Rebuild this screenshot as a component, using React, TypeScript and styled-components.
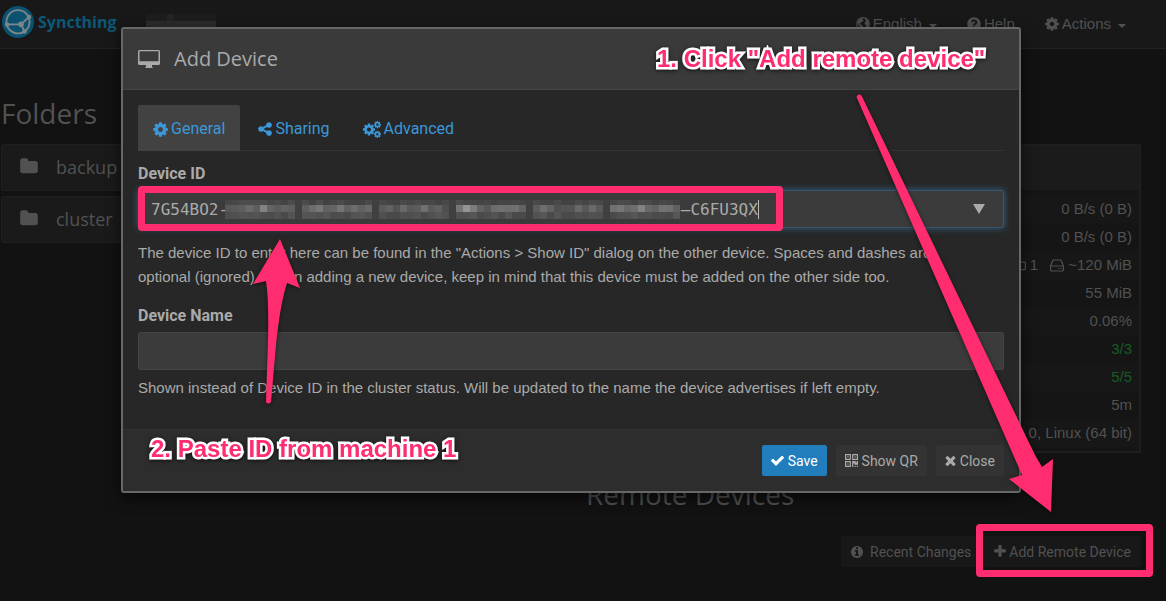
import React from "react";
import styled, { createGlobalStyle } from "styled-components";
import { FaQuestionCircle, FaRegFolder } from "react-icons/fa";

const PINK = "#ff2d6f";
const BODY = `"Liberation Sans", Arial, sans-serif`;
const HEAD = `"Open Sans", Lato, sans-serif`;

const Global = createGlobalStyle`
  * { box-sizing: border-box; }
  html, body { min-height: 100%; }
  body { margin: 0; background: #121212; color: #515151; font: 15px/24px ${BODY}; }
  h1, h2, p { margin: 0; padding: 0; font-weight: 400; }
  svg { flex: none; }
`;

const Page = styled.div`
  position: relative;
  min-height: 100vh;
  overflow: hidden;
`;
const NavBar = styled.nav`
  display: flex;
  align-items: center;
  height: 49px;
  padding: 0 40px 4px 2px;
  background: #181818;
  border-bottom: 1px solid #222;
`;
const Brand = styled.a`
  display: flex;
  align-items: center;
  gap: 4px;
  color: #0c5878;
  text-decoration: none;
  font: 700 16px/24px ${HEAD};
`;
const HostName = styled.svg`
  display: block;
  margin: 0 0 4px 29px;
  align-self: flex-end;
`;
const NavLinks = styled.div`
  display: flex;
  gap: 30px;
  margin-left: auto;
  padding-top: 4px;
`;
const NavButton = styled.button`
  display: flex;
  align-items: center;
  gap: 3px;
  padding: 0;
  border: 0;
  background: none;
  color: #515151;
  font: inherit;
`;
const Caret = styled.span`
  margin: 3px 0 0 4px;
  border: 4px solid transparent;
  border-top-color: currentColor;
  border-bottom: 0;
`;
const Columns = styled.main`
  display: grid;
  grid-template-columns: 1fr 1fr;
  gap: 30px;
  padding: 46px 25px 0 1px;
`;
const Heading = styled.h2`
  padding: 0 0 13px;
  font: 400 28px/36px ${HEAD};
`;
const FolderRow = styled.button`
  display: flex;
  align-items: center;
  gap: 18px;
  width: 100%;
  height: 47px;
  margin-bottom: 5px;
  padding: 0 18px 2px;
  border: 1px solid #1f1f1f;
  border-radius: 2px;
  background: #1a1a1a;
  color: #515151;
  font: 400 18px/24px ${HEAD};
`;
const StatusPanel = styled.section`
  margin-top: 49px;
  border: 2px solid #1e1e1e;
  background: #151515;
  padding-bottom: 4px;
`;
const PanelHead = styled.div`
  height: 44px;
  background: #1b1b1b;
  margin-bottom: 5px;
`;
const Stats = styled.table`
  width: 100%;
  border-collapse: collapse;
  td { height: 28px; padding: 0 7px; text-align: right; }
  tr:nth-child(odd) { background: #171717; }
`;
const Value = styled.td<{ $ok?: boolean }>`
  color: ${(p) => (p.$ok ? "#165c26" : "#515151")};
  svg { vertical-align: -2px; margin: 0 4px 0 8px; }
`;
const RemoteHeading = styled(Heading)`
  padding: 23px 0 24px;
`;
const Actions = styled.div`
  display: flex;
  justify-content: flex-end;
  gap: 3px;
`;
const DarkButton = styled.button<{ $wide?: boolean }>`
  display: flex;
  align-items: center;
  gap: ${(p) => (p.$wide ? 7 : 3)}px;
  height: 31px;
  padding: 0 10px;
  border: 0;
  border-radius: 2px;
  background: #181818;
  color: #515151;
  font: 14px/20px Roboto, sans-serif;
`;

const Backdrop = styled.div`
  position: absolute;
  inset: 0;
  padding: 27px 24px 0 0;
`;
const Dialog = styled.section`
  max-width: 900px;
  margin: 0 auto;
  border: 2px solid #676767;
  border-radius: 3px;
  background: #272727;
  color: #aaa;
  box-shadow: 0 5px 15px rgba(0, 0, 0, 0.6);
`;
const DialogHead = styled.header`
  display: flex;
  align-items: center;
  gap: 14px;
  height: 61px;
  padding: 0 15px;
  background: #3a3a3a;
  border-bottom: 1px solid #444;
`;
const DialogTitle = styled.h1`
  font: 400 20px/28px ${HEAD};
`;
const DialogBody = styled.div`
  padding: 15px 15px 14px;
`;
const Tabs = styled.div`
  display: flex;
  gap: 3px;
  margin-bottom: 11px;
  border-bottom: 1px solid #333;
`;
const Tab = styled.button<{ $active?: boolean }>`
  display: flex;
  align-items: center;
  gap: 3px;
  height: 46px;
  margin-bottom: -1px;
  padding: 2px 15px 0;
  border: 0;
  border-radius: 2px 2px 0 0;
  background: ${(p) => (p.$active ? "#424242" : "transparent")};
  color: #3b98d9;
  font: 16px/24px Roboto, sans-serif;
`;
const Label = styled.label`
  display: block;
  margin-bottom: 4px;
  font: 700 16px/24px Roboto, sans-serif;
`;
const Field = styled.div<{ $gap: number }>`
  position: relative;
  margin-bottom: ${(p) => p.$gap}px;
`;
const TextInput = styled.input<{ $focused?: boolean }>`
  display: block;
  width: 100%;
  height: 38px;
  padding: 0 12px;
  border: 1px solid ${(p) => (p.$focused ? "#37566c" : "#444")};
  border-radius: 2px;
  outline: 0;
  background: #3b3b3b;
  color: #aaa;
  font: 16px/24px "DejaVu Sans Mono", monospace;
  box-shadow: ${(p) => (p.$focused ? "0 0 7px rgba(60, 130, 180, 0.7)" : "none")};
`;
const Mosaic = styled.svg`
  position: absolute;
  left: 87px;
  top: 10px;
`;
const Cursor = styled.i`
  position: absolute;
  left: 620px;
  top: 10px;
  width: 1px;
  height: 19px;
  background: #bbb;
`;
const DropMark = styled.span`
  position: absolute;
  right: 19px;
  top: 14px;
  border: 6px solid transparent;
  border-top: 10px solid #aaa;
  border-bottom: 0;
`;
const Help = styled.p`
  margin-bottom: 15px;
`;
const DialogFoot = styled.footer`
  display: flex;
  justify-content: flex-end;
  gap: 9px;
  padding: 15px;
  background: #2d2d2d;
  border-top: 1px solid #333;
`;
const FootButton = styled(DarkButton)<{ $primary?: boolean }>`
  gap: 4px;
  padding: 0 9px;
  background: ${(p) => (p.$primary ? "#217dbb" : "#333")};
  color: ${(p) => (p.$primary ? "#fff" : "#aaa")};
`;

const Layer = styled.div`
  position: absolute;
  inset: 0;
  pointer-events: none;
`;
const Arrows = styled.svg`
  position: absolute;
  left: 0;
  top: 0;
  filter: drop-shadow(0 1px 2px rgba(0, 0, 0, 0.5));
`;
const Frame = styled.div<{ $x: number; $y: number; $w: number; $h: number }>`
  position: absolute;
  left: ${(p) => p.$x}px;
  top: ${(p) => p.$y}px;
  width: ${(p) => p.$w}px;
  height: ${(p) => p.$h}px;
  border: 7px solid ${PINK};
  border-radius: 4px;
`;
const Note = styled.p<{ $x: number; $y: number }>`
  position: absolute;
  left: ${(p) => p.$x}px;
  top: ${(p) => p.$y}px;
  color: ${PINK};
  font: 700 24px/28px "Liberation Sans", sans-serif;
  white-space: nowrap;
  -webkit-text-stroke: 5px #fff;
  paint-order: stroke fill;
  filter: drop-shadow(0 1px 2px rgba(0, 0, 0, 0.7));
`;

/* Brightness of the middle band of the masked part of the ID, one list per group. */
const MASK_GROUPS = [
  [88, 90, 94, 106, 94, 130, 100, 92, 98, 94],
  [94, 108, 118, 96, 100, 116, 98, 108, 96, 104],
  [90, 98, 84, 104, 88, 92, 112, 90, 96, 78],
  [118, 148, 124, 98, 88, 108, 112, 110, 112, 98],
  [92, 110, 98, 80, 84, 84, 104, 88, 106, 90],
  [112, 118, 104, 110, 130, 104, 98, 114, 112, 96],
];

const PATHS = {
  cog: "M1024 896q0-106-75-181t-181-75-181 75-75 181 75 181 181 75 181-75 75-181zm512-109v222q0 12-8 23t-20 13l-185 28q-19 54-39 91 35 50 107 138 10 12 10 25t-9 23q-27 37-99 108t-94 71q-12 0-26-9l-138-108q-44 23-91 38-16 136-29 186-7 28-36 28h-222q-14 0-24.500-8.500t-11.500-21.500l-28-184q-49-16-90-37l-141 107q-10 9-25 9-14 0-25-11-126-114-165-168-7-10-7-23 0-12 8-23 15-21 51-66.500t54-70.500q-27-50-41-99l-183-27q-13-2-21-12.500t-8-23.500v-222q0-12 8-23t19-13l186-28q14-46 39-92-40-57-107-138-10-12-10-24 0-10 9-23 26-36 98.500-107.500t94.500-71.500q13 0 26 10l138 107q44-23 91-38 16-136 29-186 7-28 36-28h222q14 0 24.500 8.500t11.500 21.500l28 184q49 16 90 37l142-107q9-9 24-9 13 0 25 10 129 119 165 170 7 8 7 22 0 12-8 23-15 21-51 66.500t-54 70.500q26 50 41 98l183 28q13 2 21 12.500t8 23.500z",
  times: "M1490 1322q0 40-28 68l-136 136q-28 28-68 28t-68-28l-294-294-294 294q-28 28-68 28t-68-28l-136-136q-28-28-28-68t28-68l294-294-294-294q-28-28-28-68t28-68l136-136q28-28 68-28t68 28l294 294 294-294q28-28 68-28t68 28l136 136q28 28 28 68t-28 68l-294 294 294 294q28 28 28 68z",
  plus: "M1600 736v192q0 40-28 68t-68 28h-416v416q0 40-28 68t-68 28h-192q-40 0-68-28t-28-68v-416h-416q-40 0-68-28t-28-68v-192q0-40 28-68t68-28h416v-416q0-40 28-68t68-28h192q40 0 68 28t28 68v416h416q40 0 68 28t28 68z",
  check: "M1671 566q0 40-28 68l-724 724-136 136q-28 28-68 28t-68-28l-136-136-362-362q-28-28-28-68t28-68l136-136q28-28 68-28t68 28l294 295 656-657q28-28 68-28t68 28l136 136q28 28 28 68z",
  folder: "M1728 608v704q0 92-66 158t-158 66h-1216q-92 0-158-66t-66-158v-960q0-92 66-158t158-66h320q92 0 158 66t66 158v32h672q92 0 158 66t66 158z",
  share: "M1344 1024q133 0 226.500 93.500t93.500 226.500-93.500 226.500-226.500 93.500-226.500-93.500-93.500-226.500q0-12 2-34l-360-180q-92 86-218 86-133 0-226.500-93.500t-93.500-226.500 93.500-226.500 226.500-93.500q126 0 218 86l360-180q-2-22-2-34 0-133 93.500-226.500t226.500-93.500 226.500 93.500 93.500 226.500-93.500 226.500-226.500 93.500q-126 0-218-86l-360 180q2 22 2 34t-2 34l360 180q92-86 218-86z",
  info: "M1152 1376v-160q0-14-9-23t-23-9h-96v-512q0-14-9-23t-23-9h-320q-14 0-23 9t-9 23v160q0 14 9 23t23 9h96v320h-96q-14 0-23 9t-9 23v160q0 14 9 23t23 9h448q14 0 23-9t9-23zm-128-896v-160q0-14-9-23t-23-9h-192q-14 0-23 9t-9 23v160q0 14 9 23t23 9h192q14 0 23-9t9-23zm640 416q0 209-103 385.500t-279.500 279.500-385.500 103-385.500-103-279.500-279.500-103-385.500 103-385.500 279.500-279.500 385.500-103 385.500 103 279.500 279.500 103 385.500z",
};

/* Icon on a 1792-unit em square, cropped to its own horizontal extent. */
const Icon = ({ name, em = 16, x = 128, w = 1536 }: { name: keyof typeof PATHS; em?: number; x?: number; w?: number }) => (
  <svg width={Math.round((em * w) / 1792)} height={em} viewBox={`${x} 0 ${w} 1792`} fill="currentColor" aria-hidden="true">
    <path d={PATHS[name]} />
  </svg>
);
const Cog = () => <Icon name="cog" em={17} x={0} />;
const Cogs = () => (
  <svg width="18" height="17" viewBox="0 0 1920 1792" fill="currentColor" aria-hidden="true">
    <path d={PATHS.cog} transform="translate(0 149) scale(.833)" />
    <path d={PATHS.cog} transform="translate(1152 -64) scale(.5)" />
    <path d={PATHS.cog} transform="translate(1152 960) scale(.5)" />
  </svg>
);
const QrIcon = () => (
  <svg width="13" height="13" viewBox="0 0 11 11" fill="currentColor" aria-hidden="true">
    <path fillRule="evenodd" d="M0 0h5v5H0zM1 1v3h3V1zM2 2h1v1H2zM6 0h5v5H6zM7 1v3h3V1zM8 2h1v1H8zM0 6h5v5H0zM1 7v3h3V7zM2 8h1v1H2zM6 6h3v1h1V6h1v3H8V8H7v3H6zM8 10h1v1H8zM10 10h1v1h-1z" />
  </svg>
);
const GlobeIcon = () => (
  <svg width="14" height="14" viewBox="0 0 14 14" aria-hidden="true">
    <circle cx="7" cy="7" r="6.300" fill="none" stroke="currentColor" strokeWidth="1.200" />
    <path fill="currentColor" d="M2 4.500 4.500 2 7 1.600 6.500 3 7.500 3.700 6 5 4.500 5.200 5 6.500 3.500 6 4 7.500 6 8 6.800 9.500 5.500 12 4.500 10 2.500 8 1.500 6zM9 2l2.500 1.200L13 6l-.5 3-1.500 2-1-1 .3-2L8.500 7.200 9 5l1.200-.6z" />
  </svg>
);
const DriveIcon = () => (
  <svg width="14" height="13" viewBox="0 0 14 13" fill="none" stroke="currentColor" strokeWidth="1.200" aria-hidden="true">
    <path d="M.6 7 2.600 1.800Q3 1 3.800 1h6.400q.8 0 1.200.8L13.400 7v4q0 1-1 1H1.600q-1 0-1-1zM.6 7h12.800M8 9.500h1.200M10.500 9.500h1.200" />
  </svg>
);
const SyncLogo = () => (
  <svg width="32" height="32" viewBox="0 0 32 32" fill="none" aria-hidden="true">
    <circle cx="16" cy="16" r="16" fill="#0b5270" />
    <g stroke="#7b868a" strokeWidth="1.800">
      <circle cx="16" cy="15.800" r="11.600" />
      <path d="M5 18.500 19 18.200 27 11M19 18.200 22.500 25.500" />
    </g>
    <g fill="#7b868a">
      <circle cx="5" cy="18.500" r="2.200" />
      <circle cx="19" cy="18.200" r="2.800" />
      <circle cx="27" cy="11" r="2.200" />
      <circle cx="22.500" cy="25.500" r="2.200" />
    </g>
  </svg>
);
const DesktopIcon = () => (
  <svg width="22" height="19" viewBox="0 0 22 19" fill="currentColor" aria-hidden="true">
    <path fillRule="evenodd" d="M1.500 0h19A1.500 1.500 0 0 1 22 1.500v12a1.500 1.500 0 0 1-1.500 1.500H14v1.500a1 1 0 0 0 1 1V18H7v-.5a1 1 0 0 0 1-1V15H1.500A1.500 1.500 0 0 1 0 13.500v-12A1.500 1.500 0 0 1 1.500 0zm0 1.300v10h19v-10z" />
  </svg>
);

const grey = (v: number) => `rgb(${v},${v},${v})`;

export default function App() {
  return (
    <>
      <Global />
      <Page>
        <NavBar>
          <Brand href="#"><SyncLogo />Syncthing</Brand>
          <HostName width="70" height="26" aria-hidden="true">
            <rect width="70" height="8" fill="#1d1d1d" />
            <rect x="21" width="7" height="8" fill="#242424" />
            <rect y="7" width="70" height="19" fill="#2b2b2b" />
          </HostName>
          <NavLinks>
            <NavButton><GlobeIcon />English <Caret /></NavButton>
            <NavButton><FaQuestionCircle size={14} />Help</NavButton>
            <NavButton><Icon name="cog" x={0} />Actions <Caret /></NavButton>
          </NavLinks>
        </NavBar>
        <Columns>
          <section>
            <Heading>Folders</Heading>
            <FolderRow><Icon name="folder" em={19} x={64} w={1664} />backup</FolderRow>
            <FolderRow><Icon name="folder" em={19} x={64} w={1664} />cluster</FolderRow>
          </section>
          <section>
            <StatusPanel>
              <PanelHead />
              <Stats>
                <tbody>
                  <tr><Value>0 B/s (0 B)</Value></tr>
                  <tr><Value>0 B/s (0 B)</Value></tr>
                  <tr><Value><FaRegFolder size={14} />1 <DriveIcon />~120 MiB</Value></tr>
                  <tr><Value>55 MiB</Value></tr>
                  <tr><Value>0.06%</Value></tr>
                  <tr><Value $ok>3/3</Value></tr>
                  <tr><Value $ok>5/5</Value></tr>
                  <tr><Value>5m</Value></tr>
                  <tr><Value>0, Linux (64 bit)</Value></tr>
                </tbody>
              </Stats>
            </StatusPanel>
            <RemoteHeading>Remote Devices</RemoteHeading>
            <Actions>
              <DarkButton $wide><Icon name="info" em={14} />Recent Changes</DarkButton>
              <DarkButton><Icon name="plus" em={15} x={192} w={1408} />Add Remote Device</DarkButton>
            </Actions>
          </section>
        </Columns>

        <Backdrop>
          <Dialog role="dialog" aria-labelledby="dialog-title">
            <DialogHead>
              <DesktopIcon />
              <DialogTitle id="dialog-title">Add Device</DialogTitle>
            </DialogHead>
            <DialogBody>
              <Tabs role="tablist">
                <Tab role="tab" $active><Cog />General</Tab>
                <Tab role="tab"><Icon name="share" />Sharing</Tab>
                <Tab role="tab"><Cogs />Advanced</Tab>
              </Tabs>
              <Label htmlFor="device-id">Device ID</Label>
              <Field $gap={13}>
                <TextInput id="device-id" $focused defaultValue={"7G54BO2-" + "\u00a0".repeat(47) + "–C6FU3QX"} />
                <Mosaic width="455" height="19" aria-hidden="true">
                  <rect width="455" height="19" fill="#404040" />
                  {MASK_GROUPS.map((group, g) =>
                    group.map((v, i) => (
                      <g key={`${g}-${i}`} transform={`translate(${(g * 11 + i) * 7} 0)`}>
                        <rect width="7" height="5" fill={grey(66 + (v % 12))} />
                        <rect y="5" width="7" height="7" fill={grey(v)} />
                        <rect y="12" width="7" height="7" fill={grey(74 + (v % 14))} />
                      </g>
                    )),
                  )}
                </Mosaic>
                <Cursor />
                <DropMark />
              </Field>
              <Help>
                The device ID to enter here can be found in the "Actions &gt; Show ID" dialog on the other device. Spaces and dashes are
                <br />
                optional (ignored). When adding a new device, keep in mind that this device must be added on the other side too.
              </Help>
              <Label htmlFor="device-name">Device Name</Label>
              <Field $gap={6}><TextInput id="device-name" /></Field>
              <Help>Shown instead of Device ID in the cluster status. Will be updated to the name the device advertises if left empty.</Help>
            </DialogBody>
            <DialogFoot>
              <FootButton $primary><Icon name="check" em={15} />Save</FootButton>
              <FootButton><QrIcon />Show QR</FootButton>
              <FootButton><Icon name="times" em={15} x={256} w={1280} />Close</FootButton>
            </DialogFoot>
          </Dialog>
        </Backdrop>

        <Layer>
          <Frame $x={138} $y={186} $w={645} $h={45} />
          <Frame $x={976} $y={524} $w={177} $h={53} />
          <Arrows width="1166" height="601" fill={PINK} aria-hidden="true">
            <path d="M861.500 95.500Q858 93 856.500 97L1022 475 1009 479 1051 512 1053 459 1042 467 1035 455Z" />
            <path d="M280 239 300 288 287 283Q280 305 276 345L271 402Q268 405 266 402L268 340Q269 300 266 281L253 284Z" />
          </Arrows>
          <Note $x={657} $y={45}>1. Click "Add remote device"</Note>
          <Note $x={151} $y={435}>2. Paste ID from machine 1</Note>
        </Layer>
      </Page>
    </>
  );
}
